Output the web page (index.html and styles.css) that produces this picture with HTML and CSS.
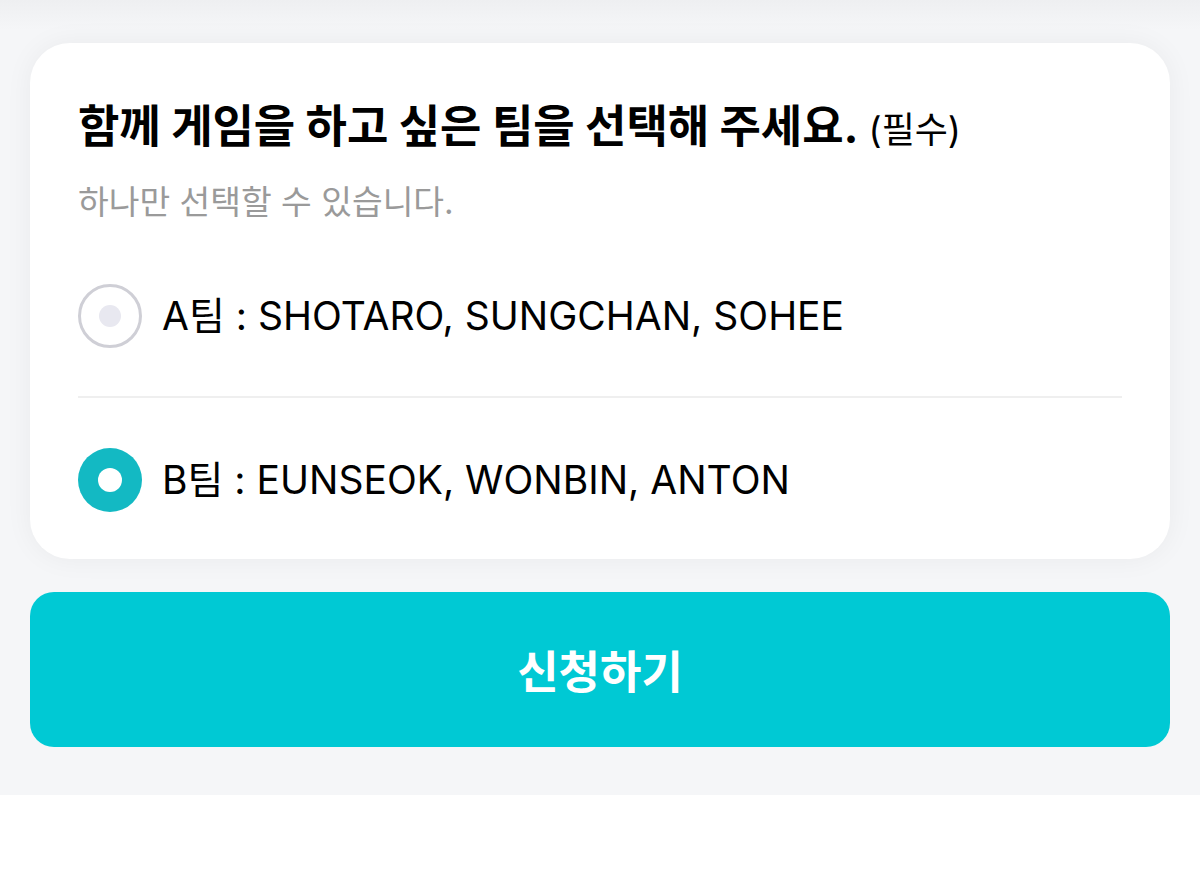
FILE: index.html
```html
<!DOCTYPE html>
<html lang="ko">
<head>
<meta charset="utf-8">
<link rel="stylesheet" href="styles.css">
</head>
<body>
<div class="page">
  <section class="card">
    <h1 class="title">함께 게임을 하고 싶은 팀을 선택해 주세요.<span class="req"> (필수)</span></h1>
    <p class="sub">하나만 선택할 수 있습니다.</p>
    <div class="option first">
      <span class="radio"></span>
      <span class="label">A팀 : SHOTARO, SUNGCHAN, SOHEE</span>
    </div>
    <div class="divider"></div>
    <div class="option last">
      <span class="radio checked"></span>
      <span class="label">B팀 : EUNSEOK, WONBIN, ANTON</span>
    </div>
  </section>
  <button class="submit">신청하기</button>
</div>
</body>
</html>
```
FILE: styles.css
```css
* { box-sizing: border-box; }
html, body { margin: 0; padding: 0; background: #ffffff; }
body {
  font-family: Inter, "Noto Sans CJK KR", sans-serif;
  color: #000;
}
.page {
  background: linear-gradient(#eeeff1 0px, #f5f6f8 30px);
  padding: 43px 30px 48px;
  display: flex;
  flex-direction: column;
  gap: 33px;
}
.card {
  background: #fff;
  border-radius: 40px;
  box-shadow: 0 0 28px rgba(0, 0, 0, 0.05);
  padding: 58px 48px 0;
  display: flex;
  flex-direction: column;
}
.title {
  margin: 0;
  font-size: 45px;
  line-height: 52px;
  font-weight: 700;
  letter-spacing: -0.1px;
}
.req {
  font-size: 36px;
  font-weight: 400;
  letter-spacing: 0;
}
.sub {
  margin: 24px 0 0;
  font-size: 33.4px;
  line-height: 44px;
  color: #9a9a9a;
}
.option {
  height: 160px;
  display: flex;
  align-items: center;
  gap: 20px;
}
.option.first { margin-top: 12px; }
.option.last { height: 161px; padding-top: 3px; }
.radio {
  width: 64px;
  height: 64px;
  border-radius: 50%;
  border: 3px solid #cfcfd6;
  display: flex;
  align-items: center;
  justify-content: center;
  flex: none;
}
.radio::after {
  content: "";
  width: 22px;
  height: 22px;
  border-radius: 50%;
  background: #e8e8f0;
}
.radio.checked {
  border: none;
  background: #13b9c3;
}
.radio.checked::after {
  width: 24px;
  height: 24px;
  background: #fff;
}
.label {
  font-size: 39px;
  line-height: 48px;
}
.divider {
  height: 2px;
  background: #efefef;
}
.submit {
  height: 155px;
  border: none;
  border-radius: 24px;
  background: #00c9d4;
  color: #fff;
  font-family: Inter, "Noto Sans CJK KR", sans-serif;
  font-size: 45px;
  font-weight: 700;
  padding: 0;
}
```
